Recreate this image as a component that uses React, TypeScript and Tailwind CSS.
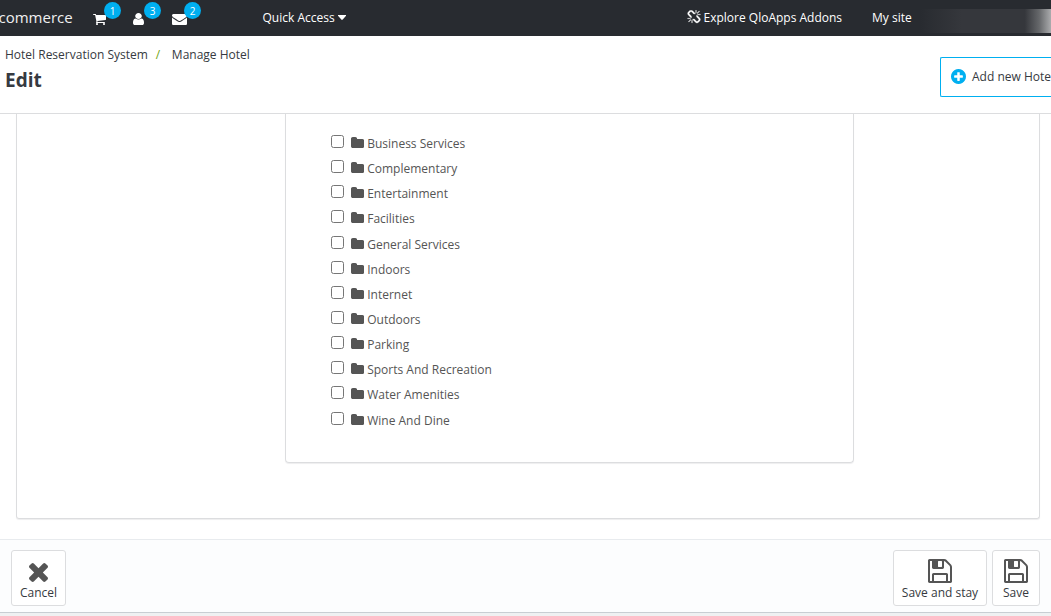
import React from "react";

type Glyph = { d: string; box: string };

const cart: Glyph = {
  box: "64 256 1664 1408",
  d: "M704 1536q0 52-38 90t-90 38-90-38-38-90 38-90 90-38 90 38 38 90zm896 0q0 52-38 90t-90 38-90-38-38-90 38-90 90-38 90 38 38 90zm128-1088v512q0 24-16.5 42.5t-40.5 21.5l-1044 122q13 60 13 70 0 16-24 64h920q26 0 45 19t19 45-19 45-45 19h-1024q-26 0-45-19t-19-45q0-11 8-31.5t16-36 21.5-40 15.5-29.5l-177-823h-204q-26 0-45-19t-19-45 19-45 45-19h256q16 0 28.5 6.5t19.5 15.5 13 24.5 8 26 5.5 29.5 4.5 26h1201q26 0 45 19t19 45z",
};
const user: Glyph = {
  box: "256 128 1280 1536",
  d: "M1536 1399q0 109-62.5 187t-150.5 78h-854q-88 0-150.5-78t-62.5-187q0-85 8.5-160.5t31.5-152 58.5-131 94-89 134.5-34.5q131 128 313 128t313-128q76 0 134.5 34.5t94 89 58.5 131 31.5 152 8.5 160.5zm-256-887q0 159-112.5 271.5t-271.5 112.5-271.5-112.5-112.5-271.5 112.5-271.5 271.5-112.5 271.5 112.5 112.5 271.5z",
};
const envelope: Glyph = {
  box: "0 256 1792 1408",
  d: "M1792 710v794q0 66-47 113t-113 47h-1472q-66 0-113-47t-47-113v-794q44 49 101 87 362 246 497 345 57 42 92.5 65.5t94.5 48 110 24.5h2q51 0 110-24.5t94.5-48 92.5-65.5q170-123 498-345 57-39 100-87zm0-294q0 79-49 151t-122 123q-376 261-468 325-10 7-42.5 31t-54 38.5-52 32.5-57.5 27-50 9h-2q-23 0-50-9t-57.5-27-52-32.5-54-38.5-42.5-31q-91-64-262-182.5t-205-142.5q-62-42-117-115.5t-55-136.5q0-78 41.5-130t118.5-52h1472q65 0 112.5 47t47.5 113z",
};
const folder: Glyph = {
  box: "64 128 1664 1408",
  d: "M1728 608v704q0 92-66 158t-158 66h-1216q-92 0-158-66t-66-158v-960q0-92 66-158t158-66h320q92 0 158 66t66 158v32h672q92 0 158 66t66 158z",
};
const plusCircle: Glyph = {
  box: "128 128 1536 1536",
  d: "M1344 960v-128q0-26-19-45t-45-19h-256v-256q0-26-19-45t-45-19h-128q-26 0-45 19t-19 45v256h-256q-26 0-45 19t-19 45v128q0 26 19 45t45 19h256v256q0 26 19 45t45 19h128q26 0 45-19t19-45v-256h256q26 0 45-19t19-45zm320-64q0 209-103 385.5t-279.5 279.5-385.5 103-385.5-103-279.5-279.5-103-385.5 103-385.5 279.5-279.5 385.5-103 385.5 103 279.5 279.5 103 385.5z",
};
const times: Glyph = {
  box: "302 366 1188 1188",
  d: "M1490 1322q0 40-28 68l-136 136q-28 28-68 28t-68-28l-294-294-294 294q-28 28-68 28t-68-28l-136-136q-28-28-28-68t28-68l294-294-294-294q-28-28-28-68t28-68l136-136q28-28 68-28t68 28l294 294 294-294q28-28 68-28t68 28l136 136q28 28 28 68t-28 68l-294 294 294 294q28 28 28 68z",
};
const floppy: Glyph = {
  box: "128 128 1536 1536",
  d: "M512 1536h768v-384h-768v384zm896 0h128v-896q0-14-10-38.5t-20-34.5l-281-281q-10-10-34-20t-39-10v416q0 40-28 68t-68 28h-576q-40 0-68-28t-28-68v-416h-128v1280h128v-416q0-40 28-68t68-28h832q40 0 68 28t28 68v416zm-384-928v-320q0-13-9.5-22.5t-22.5-9.5h-192q-13 0-22.5 9.5t-9.5 22.5v320q0 13 9.5 22.5t22.5 9.5h192q13 0 22.5-9.5t9.5-22.5zm640 32v928q0 40-28 68t-68 28h-1344q-40 0-68-28t-28-68v-1344q0-40 28-68t68-28h928q40 0 88 20t76 48l280 280q28 28 48 76t20 88z",
};
const brokenChain: Glyph = {
  box: "0 0 1792 1792",
  d: "M503 1271l-256 256q-10 9-23 9-12 0-23-9-9-10-9-23t9-23l256-256q10-9 23-9t23 9q9 10 9 23t-9 23zm169 41v320q0 14-9 23t-23 9-23-9-9-23v-320q0-14 9-23t23-9 23 9 9 23zm-224-224q0 14-9 23t-23 9h-320q-14 0-23-9t-9-23 9-23 23-9h320q14 0 23 9t9 23zm1264 128q0 120-85 203l-147 146q-83 83-203 83-121 0-204-85l-334-335q-21-21-42-56l239-18 273 274q27 27 68 27.5t68-26.5l147-146q28-28 28-67 0-40-28-68l-274-275 18-239q35 21 56 42l336 336q84 86 84 204zm-617-724l-239 18-273-274q-28-28-68-28-39 0-68 27l-147 146q-28 28-28 67 0 40 28 68l274 274-18 240q-35-21-56-42l-336-336q-84-86-84-204 0-120 85-203l147-146q83-83 203-83 121 0 204 85l334 335q21 21 42 56zm633 84q0 14-9 23t-23 9h-320q-14 0-23-9t-9-23 9-23 23-9h320q14 0 23 9t9 23zm-544-544v320q0 14-9 23t-23 9-23-9-9-23v-320q0-14 9-23t23-9 23 9 9 23zm407 151l-256 256q-11 9-23 9t-23-9q-9-10-9-23t9-23l256-256q10-9 23-9t23 9q9 10 9 23t-9 23z",
};

function Icon({ glyph, className }: { glyph: Glyph; className: string }) {
  return (
    <svg viewBox={glyph.box} preserveAspectRatio="none" fill="currentColor" aria-hidden="true" className={`shrink-0 ${className}`}>
      <path d={glyph.d} />
    </svg>
  );
}

function Notice({ glyph, size, count }: { glyph: Glyph; size: string; count: number }) {
  return (
    <a className="relative flex h-[25px] w-10 items-end">
      <Icon glyph={glyph} className={size} />
      <span className="absolute left-[11px] top-[2px] flex size-[17px] items-center justify-center rounded-full bg-[#00aff0] text-[10px] leading-none">
        {count}
      </span>
    </a>
  );
}

function ActionButton({ glyph, size, label, width }: { glyph: Glyph; size: string; label: string; width: string }) {
  return (
    <button className={`flex h-14 flex-col items-center rounded-[3px] border border-[#dcdddf] bg-white ${width}`}>
      <span className="flex h-[33px] items-end pb-px text-[#555]">
        <Icon glyph={glyph} className={size} />
      </span>
      <span className="whitespace-nowrap text-[12px] leading-[17px]">{label}</span>
    </button>
  );
}

const services = [
  "Business Services",
  "Complementary",
  "Entertainment",
  "Facilities",
  "General Services",
  "Indoors",
  "Internet",
  "Outdoors",
  "Parking",
  "Sports And Recreation",
  "Water Amenities",
  "Wine And Dine",
];

export default function App() {
  return (
    <div className="flex h-[616px] w-[1051px] flex-col overflow-hidden bg-white font-['Open_Sans',sans-serif] text-[12px] text-[#363a41]">
      <nav className="flex h-9 shrink-0 items-start overflow-hidden bg-[#282b30] text-white">
        <span className="-ml-[1.5px] w-[94.5px] shrink-0 text-[15px] leading-[35px] text-[#f0f0f0]">commerce</span>
        <div className="flex w-[169.5px] shrink-0">
          <Notice glyph={cart} size="h-[11px] w-[13px]" count={1} />
          <Notice glyph={user} size="h-3 w-[11px]" count={3} />
          <Notice glyph={envelope} size="-ml-px h-[11px] w-[15px]" count={2} />
        </div>
        <a className="flex w-[424.5px] shrink-0 items-center leading-[35px]">
          Quick Access
          <svg viewBox="0 0 8 5" fill="currentColor" aria-hidden="true" className="ml-[3px] h-[5px] w-2 shrink-0">
            <path d="M0 0h8v.8L4.500 4.700h-1L0 .8z" />
          </svg>
        </a>
        <a className="flex w-[185px] shrink-0 gap-[2.5px] leading-[35px]">
          <Icon glyph={brokenChain} className="mt-[10px] size-[14px] stroke-current [stroke-width:40]" />
          Explore QloApps Addons
        </a>
        <a className="w-[48px] shrink-0 leading-[35px]">My site</a>
        <span className="mt-[9px] h-6 flex-1 bg-[linear-gradient(90deg,#282b30_0%,#35373c_32%,#35373c_80%,#66686b_91%,#aaabad_100%)]" />
      </nav>

      <header className="flex h-[78px] shrink-0 justify-between border-b border-[#dcdddf]">
        <div className="pl-[5px] pt-[10px]">
          <div className="flex leading-[18px]">
            <span>Hotel Reservation System</span>
            <span className="ml-2 w-4 text-[#72a510]">/</span>
            <span>Manage Hotel</span>
          </div>
          <h1 className="mt-[3px] text-[19px] font-bold leading-[26px]">Edit</h1>
        </div>
        <button className="mt-[21px] flex h-10 w-[111px] items-center gap-[6px] overflow-hidden whitespace-nowrap rounded-l-[2px] border border-r-0 border-[#00aff0] pl-[10px] text-[12px]">
          <Icon glyph={plusCircle} className="-mt-px size-[15px] text-[#00aff0]" />
          Add new Hotel
        </button>
      </header>

      <main className="flex h-[425px] shrink-0 flex-col px-4 pr-[11px]">
        <section className="flex h-[405px] flex-col rounded-b-[3px] border border-t-0 border-[#dcdddf] pl-[268px] shadow-[0_1px_1px_#eeeeef]">
          <ul className="flex h-[349px] w-[569px] flex-col rounded-b-[4px] border border-t-0 border-[#dcdddf] pl-[45px] pt-[17px] text-[#555] shadow-[0_1px_1px_#eeeeef]">
            {services.map((name) => (
              <li key={name} className="flex h-[25.15px] shrink-0 items-start">
                <input type="checkbox" className="m-0 mt-1 size-[13px]" />
                <Icon glyph={folder} className="ml-[7px] mt-[6px] h-[11px] w-[13.2px]" />
                <span className="ml-[3px] leading-[25px]">{name}</span>
              </li>
            ))}
          </ul>
        </section>
      </main>

      <footer className="flex h-[73px] shrink-0 border-t border-[#e8ebee] bg-[#fcfdfe] pl-[11px] pr-[11px] pt-[10px]">
        <ActionButton glyph={times} size="mb-px size-[19px]" label="Cancel" width="w-[55px]" />
        <div className="ml-auto flex gap-[5px]">
          <ActionButton glyph={floppy} size="size-6" label="Save and stay" width="w-[94px]" />
          <ActionButton glyph={floppy} size="size-6" label="Save" width="w-[48px]" />
        </div>
      </footer>
      <div className="h-1 shrink-0 border-t border-[#c8ced3] bg-[#eff1f2]" />
    </div>
  );
}
